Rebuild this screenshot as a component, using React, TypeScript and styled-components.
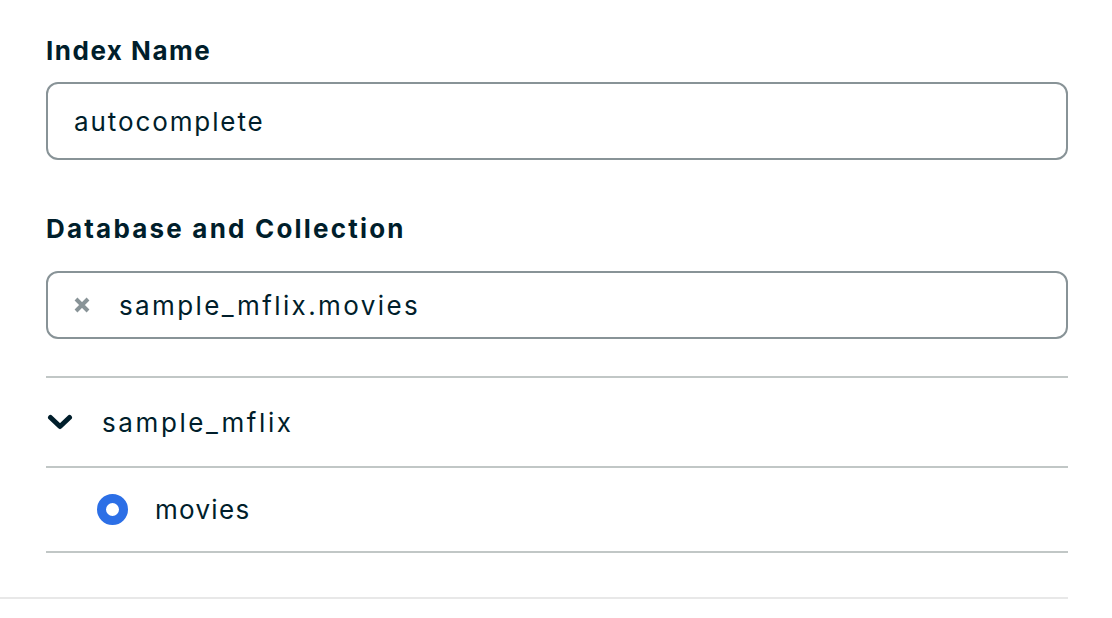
import React from "react";
import styled, { createGlobalStyle } from "styled-components";

const Global = createGlobalStyle`
  html, body { margin: 0; padding: 0; background: #ffffff; }
  body { font-family: "Inter", "Noto Sans", sans-serif; color: #001e2b; }
  * { box-sizing: border-box; }
`;

const Page = styled.div`
  width: 1068px;
  border-bottom: 2px solid #e8e8e8;
  padding: 0 0 44px 46px;
`;

const Field = styled.div<{ $top: number }>`
  display: flex;
  flex-direction: column;
  padding-top: ${(p) => p.$top}px;
`;

const Label = styled.label<{ $gap: number; $spacing: number }>`
  font-size: 26px;
  line-height: 28px;
  font-weight: 700;
  letter-spacing: ${(p) => p.$spacing}px;
  color: #001e2b;
  margin-bottom: ${(p) => p.$gap}px;
`;

const InputBox = styled.div<{ $height: number; $pad: number; $spacing: number }>`
  display: flex;
  align-items: center;
  gap: 28px;
  height: ${(p) => p.$height}px;
  border: 2px solid #889397;
  border-radius: 12px;
  padding-left: ${(p) => p.$pad}px;
  font-size: 26px;
  letter-spacing: ${(p) => p.$spacing}px;
  color: #001e2b;
`;

const List = styled.div`
  margin-top: 37px;
  display: flex;
  flex-direction: column;
  border-top: 2px solid #c1c7c6;
`;

const Row = styled.div<{ $height: number; $indent: number; $spacing: number }>`
  display: flex;
  align-items: center;
  height: ${(p) => p.$height}px;
  border-bottom: 2px solid #c1c7c6;
  padding-left: ${(p) => p.$indent}px;
  font-size: 26px;
  letter-spacing: ${(p) => p.$spacing}px;
  color: #001e2b;
`;

const IconSlot = styled.span<{ $width: number }>`
  display: inline-flex;
  align-items: center;
  width: ${(p) => p.$width}px;
  flex: none;
`;

const Radio = styled.span`
  width: 31px;
  height: 31px;
  border-radius: 50%;
  border: 9.5px solid #2c6fe6;
  background: #ffffff;
  flex: none;
`;

const ChevronDown = () => (
  <svg width="26" height="16" viewBox="0 0 26 16" fill="none">
    <polyline
      points="3.5,3.5 13,12.5 22.5,3.5"
      stroke="#001e2b"
      strokeWidth="5"
      strokeLinecap="round"
      strokeLinejoin="round"
    />
  </svg>
);

const XIcon = () => (
  <svg width="18" height="18" viewBox="0 0 18 18" fill="none">
    <path d="M3 3 L15 15 M15 3 L3 15" stroke="#889397" strokeWidth="4" strokeLinecap="butt" />
  </svg>
);

export default function App() {
  return (
    <>
      <Global />
      <Page>
        <Field $top={37}>
          <Label $gap={17} $spacing={1.5}>Index Name</Label>
          <InputBox $height={78} $pad={26} $spacing={1.9}>
            autocomplete
          </InputBox>
        </Field>
        <Field $top={55}>
          <Label $gap={28} $spacing={2.2}>Database and Collection</Label>
          <InputBox $height={68} $pad={25} $spacing={2.4}>
            <XIcon />
            <span>sample_mflix.movies</span>
          </InputBox>
        </Field>
        <List>
          <Row $height={90} $indent={1} $spacing={2.6}>
            <IconSlot $width={55}>
              <ChevronDown />
            </IconSlot>
            sample_mflix
          </Row>
          <Row $height={85} $indent={51} $spacing={1.3}>
            <Radio />
            <IconSlot $width={27} />
            movies
          </Row>
        </List>
      </Page>
    </>
  );
}
